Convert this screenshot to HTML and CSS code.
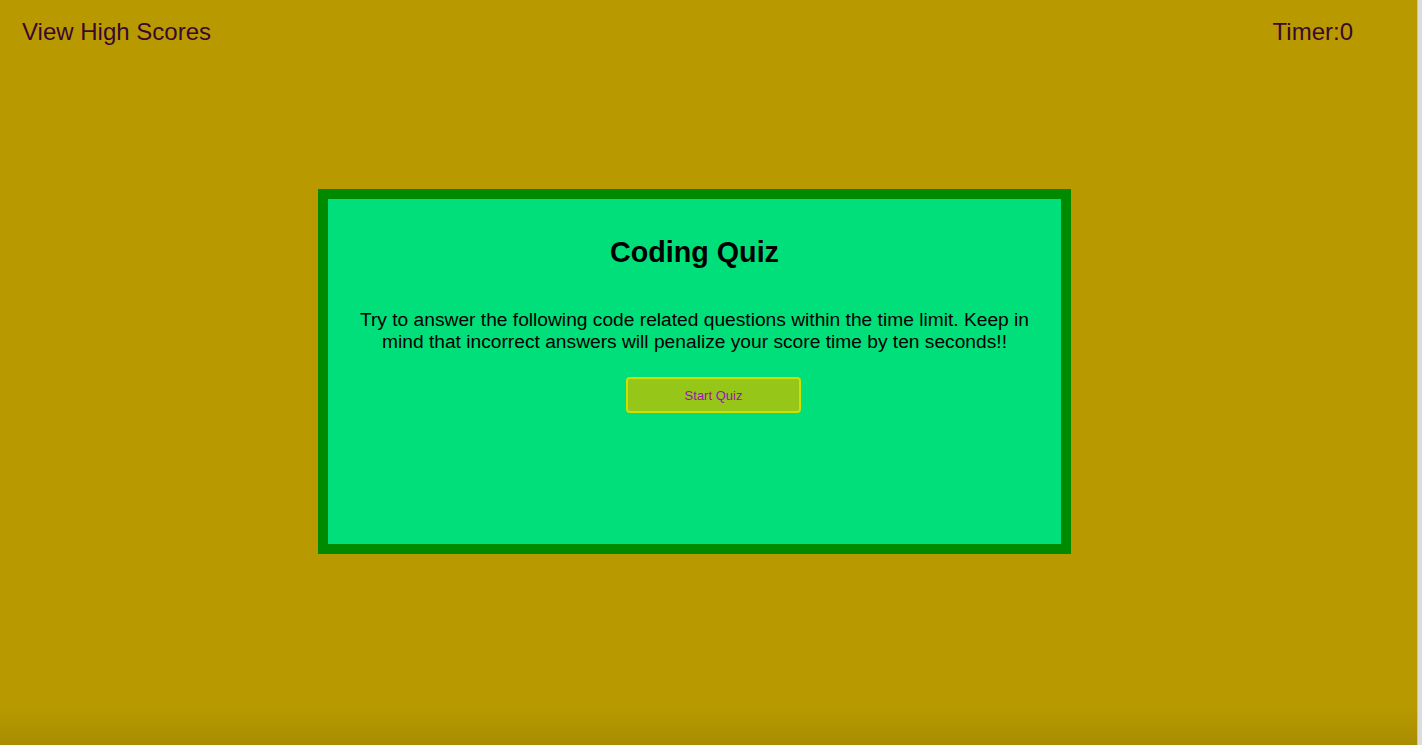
FILE: index.html
```html
<!DOCTYPE html>
<html lang="en">
<head>
<meta charset="utf-8">
<title>Coding Quiz</title>
<link rel="stylesheet" href="styles.css">
</head>
<body>
<div class="page">
  <header class="topbar">
    <a class="scores-link">View High Scores</a>
    <div class="timer">Timer:<span>0</span></div>
  </header>
  <main class="stage">
    <section class="card">
      <h1 class="title">Coding Quiz</h1>
      <p class="intro">Try to answer the following code related questions within the time limit. Keep in mind that incorrect answers will penalize your score time by ten seconds!!</p>
      <button class="start-btn" type="button">Start Quiz</button>
    </section>
  </main>
</div>
<div class="edge"></div>
</body>
</html>
```

FILE: styles.css
```css
html, body {
  margin: 0;
  height: 100%;
}
body {
  display: flex;
  background: #b89a00;
  font-family: "Liberation Sans", Arial, sans-serif;
  overflow: hidden;
}
.page {
  flex: 1;
  height: 745px;
  background: linear-gradient(to bottom, #b89a00 0, #b89a00 705px, #a88d00 745px);
}
.edge {
  width: 4px;
  background: #dcdcdc;
  border-left: 1px solid #c4c4c4;
}
.topbar {
  display: flex;
  justify-content: space-between;
  align-items: center;
  height: 64px;
  padding: 0 64px 0 22px;
  color: #3a0830;
  font-size: 24px;
}
.scores-link {
  cursor: pointer;
}
.stage {
  padding: 125px 0 0 318px;
}
.card {
  width: 733px;
  height: 345px;
  border: 10px solid #008a00;
  background: #00df7a;
  display: flex;
  flex-direction: column;
  align-items: center;
  box-sizing: content-box;
}
.title {
  margin: 36px 0 0;
  font-size: 28.7px;
  font-weight: bold;
  color: #000;
  line-height: 34px;
}
.intro {
  margin: 40px 30px 0;
  font-size: 19.2px;
  line-height: 22px;
  text-align: center;
  color: #000;
}
.start-btn {
  margin: 24px 0 0 38px;
  width: 175px;
  height: 36px;
  background: #96c618;
  border: 2px solid #cde000;
  border-radius: 4px;
  color: #a010b0;
  font-family: "Liberation Sans", Arial, sans-serif;
  font-size: 13px;
}
```
